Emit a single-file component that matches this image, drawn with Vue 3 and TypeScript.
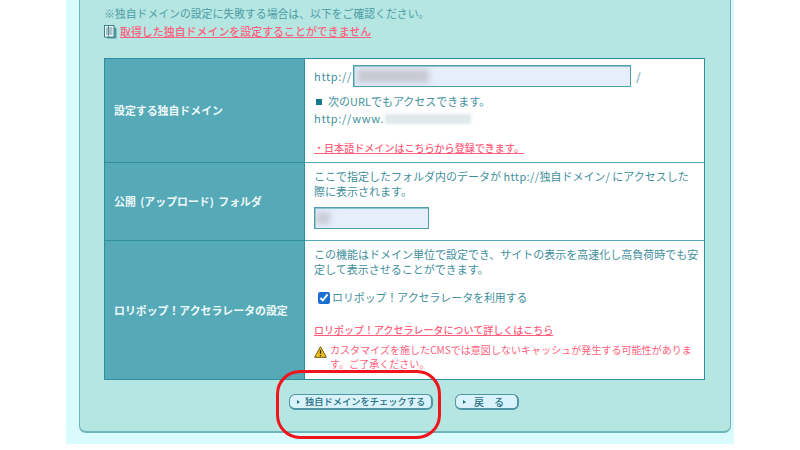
<script setup lang="ts">
interface Btn { label: string; cls: string }
const buttons: Btn[] = [
  { label: '独自ドメインをチェックする', cls: 'btn-check' },
  { label: '戻　る', cls: 'btn-back' },
]
</script>

<template>
  <div class="page">
    <div class="panel">
      <div class="card">
        <p class="note">※独自ドメインの設定に失敗する場合は、以下をご確認ください。</p>
        <p class="help">
          <svg class="doc" width="13" height="14" viewBox="0 0 13 14">
            <rect x="2.5" y="2.5" width="10" height="11" rx="1" fill="#4f9aa3" />
            <rect x="0.5" y="0.5" width="9.5" height="11.5" fill="#f2fbfb" stroke="#3f7f8a" />
            <path d="M2 3h6.5M2 5h6.5M2 7h6.5M2 9h6.5M4.5 1v10.5" stroke="#5a8f98" stroke-width="1" fill="none" />
          </svg>
          <a class="link">取得した独自ドメインを設定することができません</a>
        </p>

        <div class="table">
          <div class="label row1">設定する独自ドメイン</div>
          <div class="cell row1 c1">
            <div class="domain">
              <span class="latin http">http://</span>
              <div class="input wide"><span class="blur b-domain"></span></div>
              <span>/</span>
            </div>
            <p class="also"><span class="sq"></span>次のURLでもアクセスできます。</p>
            <p class="www"><span class="latin">http://www.</span><span class="blur b-www"></span></p>
            <a class="link small">・日本語ドメインはこちらから登録できます。</a>
          </div>

          <div class="label row2 spaced">公開 (アップロード) フォルダ</div>
          <div class="cell row2 c2">
            <p>ここで指定したフォルダ内のデータが <span class="latin tight">http://</span>独自ドメイン/ にアクセスした<br />際に表示されます。</p>
            <div class="input narrow"><span class="blur b-folder"></span></div>
          </div>

          <div class="label row3">ロリポップ！アクセラレータの設定</div>
          <div class="cell row3 c3">
            <p>この機能はドメイン単位で設定でき、サイトの表示を高速化し高負荷時でも安<br />定して表示させることができます。</p>
            <label class="check"><input type="checkbox" checked />ロリポップ！アクセラレータを利用する</label>
            <a class="link detail">ロリポップ！アクセラレータについて詳しくはこちら</a>
            <div class="warn">
              <svg class="tri" width="13" height="12" viewBox="0 0 13 12">
                <path d="M6.5 .7 12.4 11.3H.6Z" fill="#f2c21b" stroke="#6b5a1a" stroke-width="1" stroke-linejoin="round" />
                <path d="M6.5 4v4M6.5 9v1.2" stroke="#3a3010" stroke-width="1.3" fill="none" />
              </svg>
              <p>カスタマイズを施したCMSでは意図しないキャッシュが発生する可能性がありま<br />す。ご了承ください。</p>
            </div>
          </div>
        </div>

        <div class="actions">
          <button v-for="b in buttons" :key="b.label" type="button" class="btn" :class="b.cls">
            <span class="arrow"></span>{{ b.label }}
          </button>
        </div>
      </div>
    </div>
    <div class="annotation"></div>
  </div>
</template>

<style>
html, body { margin: 0; background: #fff; }
</style>

<style scoped>
.page {
  position: relative;
  width: 800px;
  height: 450px;
  overflow: hidden;
  background: #fff;
  font-family: "Noto Sans CJK JP", "Noto Sans", sans-serif;
  font-size: 11px;
  line-height: 15px;
  color: #3f8f9c;
}
p { margin: 0; }
.latin { letter-spacing: 0.7px; }
.tight { letter-spacing: 0.4px; }
.panel {
  width: 668px;
  height: 444px;
  margin-left: 66px;
  padding-left: 13px;
  box-sizing: border-box;
  background: #d9fbfd;
}
.card {
  width: 652px;
  height: 433px;
  box-sizing: border-box;
  padding: 6px 25px 0 24px;
  background: #b5e6e2;
  border: 1px solid #6db5b8;
  border-top: 0;
  border-bottom-width: 2px;
  border-radius: 0 0 7px 7px;
}
.note { height: 15px; font-size: 10.85px; color: #4c9ca6; }
.help {
  display: flex;
  align-items: center;
  gap: 3px;
  height: 15px;
  margin-top: 3px;
  font-size: 10.95px;
}
.link {
  color: #ff5f7e;
  font-weight: 500;
  text-decoration: underline;
}
.table {
  display: grid;
  grid-template-columns: 200px 399px;
  grid-template-rows: 103px 78px 139px;
  margin-top: 19px;
  width: 601px;
  height: 322px;
  box-sizing: border-box;
  border: 1px solid #2f8f9f;
  background: #fff;
}
.label {
  display: flex;
  align-items: center;
  padding-left: 9px;
  background: #56a9b7;
  color: #eefafa;
  font-size: 10.9px;
  font-weight: 700;
  border-top: 1px solid #2f8f9f;
  border-right: 1px solid #2f8f9f;
  box-sizing: border-box;
  white-space: pre;
}
.spaced { word-spacing: 2px; }
.cell {
  background: #fff;
  padding: 0 5px 0 9px;
  border-top: 1px solid #55a8b6;
  box-sizing: border-box;
  min-width: 0;
}
.row1 { border-top: 0; }
.c1 { padding-top: 6px; }
.domain { display: flex; align-items: center; gap: 5px; height: 22px; }
.http { margin-right: -4px; }
.input {
  box-sizing: border-box;
  height: 22px;
  background: #e6eefc;
  border: 1px solid #4fa0ae;
  box-shadow: inset 1px 1px 0 #8cc4cc;
  display: flex;
  align-items: center;
  overflow: hidden;
}
.wide { width: 278px; }
.narrow { width: 115px; margin-top: 8px; }
.blur { display: inline-block; filter: blur(3px); background: #c7c9d2; }
.b-domain { width: 72px; height: 14px; margin-left: 3px; }
.b-folder { width: 14px; height: 12px; margin-left: 1px; }
.b-www {
  width: 86px;
  height: 10px;
  background: #dfe9ea;
  filter: blur(1.5px);
  margin-left: 1px;
}
.also { display: flex; align-items: center; margin-top: 7px; }
.sq {
  width: 6px;
  height: 6px;
  background: #14798c;
  margin: 0 6px 0 2px;
}
.www { display: flex; align-items: center; margin-top: 2px; }
.small { display: block; margin-top: 14px; font-size: 10.05px; }
.c2 { padding-top: 6px; }
.c3 { padding-top: 6px; }
.check {
  display: flex;
  align-items: center;
  margin: 13px 0 0 4px;
  height: 15px;
  color: #3f8f9c;
  font-size: 10.9px;
}
.check input {
  width: 12px;
  height: 12px;
  margin: 0 2px 0 0;
  accent-color: #1a6fd0;
}
.detail { display: block; margin-top: 17px; font-size: 10px; }
.warn { display: flex; gap: 3px; margin-top: 6px; color: #ff5f7e; }
.tri { flex: none; margin-top: 3px; }
.warn p { font-size: 10.05px; line-height: 14px; }
.actions {
  display: flex;
  gap: 22px;
  margin: 14px 0 0 185px;
}
.btn {
  display: flex;
  align-items: center;
  box-sizing: border-box;
  height: 16px;
  padding: 0 0 0 7px;
  background: #d9f3fc;
  border: 1px solid #4f95a3;
  border-right-width: 2px;
  border-bottom-width: 2px;
  border-radius: 6px;
  font-family: inherit;
  font-size: 9.25px;
  line-height: 13px;
  color: #256f80;
  font-weight: 500;
  white-space: pre;
}
.btn-check { width: 144px; }
.btn-back { width: 64px; font-size: 10px; }
.btn-back .arrow { margin-right: 8px; }
.arrow {
  width: 0;
  height: 0;
  border-left: 3px solid #256f80;
  border-top: 2.5px solid transparent;
  border-bottom: 2.5px solid transparent;
  margin-right: 5px;
}
.annotation {
  position: absolute;
  left: 276px;
  top: 370px;
  width: 165px;
  height: 69px;
  box-sizing: border-box;
  border: 3px solid #f0141c;
  border-radius: 24px;
}
</style>
